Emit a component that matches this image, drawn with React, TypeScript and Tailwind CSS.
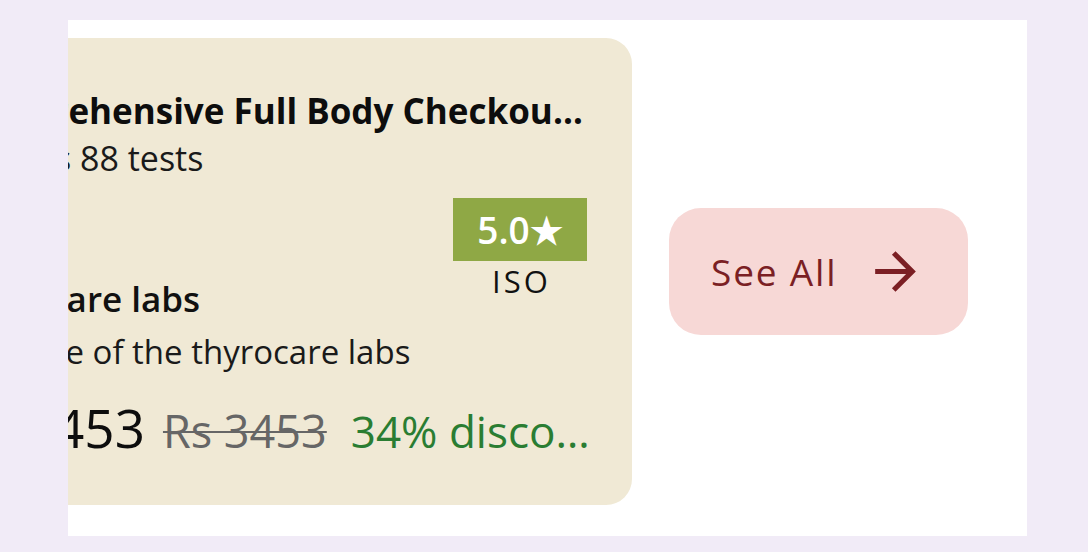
import React from "react";

function ArrowForward({ size = 61, className = "" }: { size?: number; className?: string }) {
  return (
    <svg width={size} height={size} viewBox="0 0 24 24" className={className} fill="currentColor">
      <path d="M12 4l-1.41 1.41L16.17 11H4v2h12.17l-5.58 5.59L12 20l8-8z" />
    </svg>
  );
}

export default function App() {
  return (
    <div
      className="w-[1088px] h-[552px] bg-[#f1ebf7] pt-[20px] pl-[68px]"
      style={{ fontFamily: '"Open Sans", "Noto Sans", sans-serif' }}
    >
      <div className="w-[959px] h-[516px] bg-white overflow-hidden pt-[18px]">
        <div className="h-[467px] flex items-center">
          <div className="shrink-0 w-[722px] h-[467px] -ml-[158px] bg-[#f0e9d5] rounded-[26px] pl-[42px] pr-[42px] pt-[51px] flex flex-col">
            <div className="truncate font-bold text-[35px] leading-[44px] text-[#0d0d0d] -mr-[4px]">
              Comprehensive Full Body Checkout Package
            </div>
            <div className="text-[34px] leading-[44px] text-[#1a1a1a] truncate mt-[3px] -ml-[13px]">Includes 88 tests</div>
            <div className="flex justify-between items-start mt-[18px]">
              <div className="min-w-0 pt-[81px]">
                <div className="font-semibold text-[35px] leading-[40px] text-[#111] truncate">Thyrocare labs</div>
                <div className="text-[33px] leading-[44px] text-[#1a1a1a] mt-[11px] truncate">
                  Also one of the thyrocare labs
                </div>
              </div>
              <div className="flex flex-col items-center shrink-0 mr-[3px]">
                <div className="bg-[#8fa845] w-[134px] h-[63px] flex items-center justify-center text-white text-[37px] font-semibold leading-none">
                  5.0★
                </div>
                <div className="text-[31px] leading-[38px] tracking-[0.1em] text-[#111] mt-[1px] pl-[3px]">ISO</div>
              </div>
            </div>
            <div className="flex items-baseline mt-[24px] min-w-0 whitespace-nowrap -mr-[4px]">
              <span className="text-[53px] leading-[60px] text-[#0d0d0d] shrink-0">Rs 2453</span>
              <span className="text-[45px] leading-[54px] text-[#666] line-through ml-[18px] shrink-0 decoration-[2px]">
                Rs 3453
              </span>
              <span className="text-[44px] leading-[54px] text-[#2a7d32] ml-[24px] truncate min-w-0">
                34% discount
              </span>
            </div>
          </div>
          <div className="shrink-0 ml-[37px] w-[299px] h-[127px] rounded-[32px] bg-[#f7d8d6] flex items-center pl-[42px] gap-[28px] text-[#7b1f24]">
            <span className="text-[37px] leading-none tracking-[0.05em] font-medium">See All</span>
            <ArrowForward size={61} />
          </div>
        </div>
      </div>
    </div>
  );
}
